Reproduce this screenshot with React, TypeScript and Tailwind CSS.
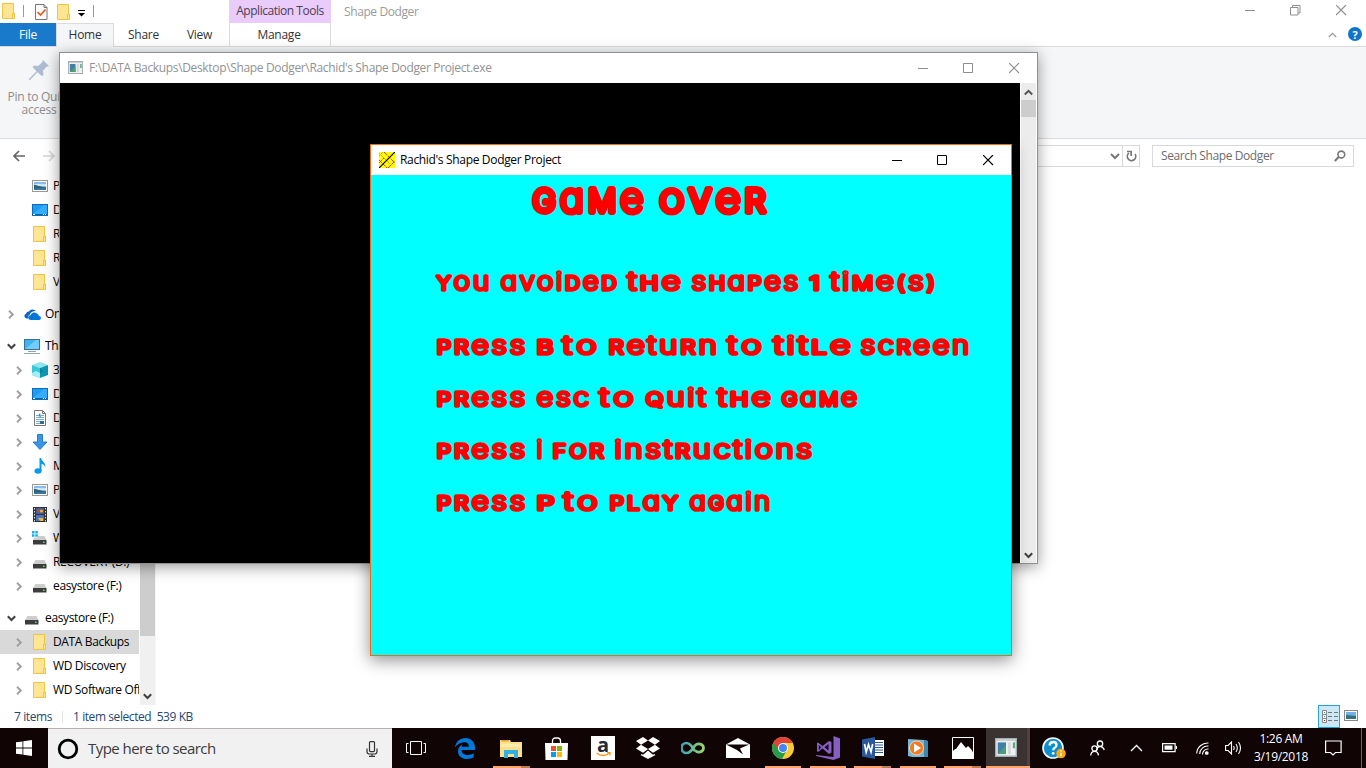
import React from "react";

type Kids = { children?: React.ReactNode };

/* ---------- small glyphs ---------- */

const Folder = () => (
  <svg width="14" height="16" viewBox="0 0 14 16">
    <path d="M.5.5h11v9.500h1v5.500H.5z" fill="#ffe594" stroke="#eec441" />
    <path d="M10.500 15.500v-5h2v5z" fill="#ffe594" stroke="#eec441" />
  </svg>
);

const Picture = () => (
  <svg width="16" height="12" viewBox="0 0 16 12">
    <rect x=".5" y=".5" width="15" height="11" fill="#fff" stroke="#9a9a9a" />
    <rect x="2" y="2" width="12" height="8" fill="#8dbdf0" />
    <path d="M2 5c3-2 5 0 12-1v2H2z" fill="#d9ecfb" />
    <path d="M2 5c4 0 6 2 12 2v3H2z" fill="#2e6470" />
    <path d="M2 8.500l12-1V10H2z" fill="#3d74a6" />
  </svg>
);

const DesktopIcon = () => (
  <svg width="16" height="12" viewBox="0 0 16 12">
    <rect x=".5" y=".5" width="15" height="11" fill="#1e9bf5" stroke="#0b70b8" />
    <path d="M1 10L12 1h3v9z" fill="#36adff" />
    <path d="M1 10.500h14" stroke="#0a64a8" />
    <path d="M1 10.500h2M11 10.500h1M13 10.500h1" stroke="#fff" />
  </svg>
);

const Cloud = () => (
  <svg width="17" height="11" viewBox="0 0 17 11">
    <path d="M2.500 9.500A2.500 2.500 0 0 1 2 4.700 3 3 0 0 1 5 2.500 4.300 4.300 0 0 1 12 2C8 2 6 4 6 5.500 4 6 3.700 8 4 9.500z" fill="#0a66c2" />
    <path d="M6.500 11a2.400 2.400 0 0 1 0-4.800A4 4 0 0 1 13.500 5 2.500 2.500 0 0 1 15 7a2 2 0 0 1 0 4z" fill="#0078d7" />
  </svg>
);

const Monitor = () => (
  <svg width="17" height="15" viewBox="0 0 17 15">
    <rect x=".5" y=".5" width="15" height="10" fill="#3fb2f2" stroke="#3c7196" />
    <path d="M1 10L12 1h3v9z" fill="#72ccfa" />
    <path d="M4 12.500h8M0 14.500h16" stroke="#91a5b5" />
  </svg>
);

const Cube = () => (
  <svg width="16" height="16" viewBox="0 0 16 16">
    <path d="M8 0l8 3-8 3-8-3z" fill="#8fe6ee" />
    <path d="M0 3l8 3v10l-8-3z" fill="#38c6d9" />
    <path d="M16 3L8 6v10l8-3z" fill="#1097b0" />
    <path d="M0 11l4-2 4 2v5l-8-3z" fill="#a5eef2" />
    <path d="M8 6l3 3-3 3z" fill="#0b7f9c" />
  </svg>
);

const Doc = () => (
  <svg width="13" height="16" viewBox="0 0 13 16">
    <path d="M.5.500h8l3 3v12H.5z" fill="#fff" stroke="#777" />
    <path d="M8.500.5v3h3" fill="none" stroke="#777" />
    <path d="M2 5.500h2M7 5.500h3M2 7.500h8M2 9.500h8M2 11.500h4M2 13.500h4" stroke="#7aa9c9" />
    <path d="M4 6l2-3 1 4z" fill="#2588c8" />
    <rect x="6" y="11" width="4" height="3" fill="#2a6f96" />
  </svg>
);

const Down = () => (
  <svg width="16" height="16" viewBox="0 0 16 16">
    <path d="M5.500.5h5V8H15l-7 7.500L1 8h4.500z" fill="#3a95e4" stroke="#2a7cc9" />
  </svg>
);

const Music = () => (
  <svg width="12" height="16" viewBox="0 0 12 16">
    <ellipse cx="4" cy="13" rx="3.600" ry="2.800" fill="#0a98f0" />
    <path d="M5.500 0h1.700c.2 3.500 4.800 4 4 9.500C10.600 7 9 6 7.500 6v7h-2z" fill="#0a98f0" />
  </svg>
);

const Film = () => (
  <svg width="14" height="15" viewBox="0 0 14 15">
    <rect width="14" height="15" fill="#333" />
    <path d="M1.500 1v14M12.500 1v14" stroke="#ddd" strokeDasharray="1.500 1.500" />
    <rect x="3" y="1" width="8" height="6" fill="#3b5fae" />
    <rect x="3" y="8" width="8" height="6" fill="#4b73c4" />
    <circle cx="6" cy="4" r="2" fill="#c34a2c" />
    <circle cx="8.500" cy="4" r="1.600" fill="#e2b530" />
    <path d="M5 11h5v3H7z" fill="#e5be3a" />
  </svg>
);

const Drive = ({ win }: { win?: boolean }) => (
  <svg width="16" height="14" viewBox="0 0 16 14">
    {win && <path d="M0 0h2.500v2.500H0zM3.300 0h2.500v2.500H3.300zM0 3.300h2.500v2.500H0zM3.300 3.300h2.500v2.500H3.300z" fill="#10b1ea" />}
    <path d={win ? "M6 5h6.500l2 4H1l1.500-2.500H6z" : "M3.500 5h9l2 4H1z"} fill="#cdcdcd" />
    <rect x="1" y="9" width="13.500" height="4.500" fill="#3c3c3c" />
    <rect x="11" y="10.500" width="1.500" height="1.500" fill="#3df06a" />
  </svg>
);

const ConsoleIcon = ({ w, h }: { w: number; h: number }) => (
  <svg width={w} height={h} viewBox="0 0 16 13" preserveAspectRatio="none">
    <rect x=".5" y=".5" width="15" height="12" fill="#eef0f1" stroke="#a4adb2" />
    <path d="M1 1.500h14" stroke="#c3cbd0" />
    <rect x="2" y="3" width="6" height="8" fill="#3f7fa8" />
    <path d="M2 11L8 5v6z" fill="#4f9d74" />
    <rect x="9.500" y="3" width="2" height="8" fill="#d5d8da" />
    <rect x="13" y="3" width="1.500" height="4" fill="#55a77c" />
  </svg>
);

const Chev = ({ open }: { open?: boolean }) =>
  open ? (
    <svg width="9" height="7" viewBox="0 0 9 7"><path d="M.8 1.200L4.500 5 8.200 1.200" fill="none" stroke="#404040" strokeWidth="2" /></svg>
  ) : (
    <svg width="6" height="9" viewBox="0 0 6 9"><path d="M1 .8L4.800 4.500 1 8.200" fill="none" stroke="#a0a0a0" strokeWidth="1.900" /></svg>
  );

const Controls = ({ color, restore }: { color: string; restore?: boolean }) => (
  <div className="flex">
    <div className="flex h-[11px] w-[46px] justify-center"><svg width="11" height="11" viewBox="0 0 11 11"><path d="M0 5.500h10" stroke={color} /></svg></div>
    <div className="flex h-[11px] w-[45px] justify-center">
      <svg width="11" height="11" viewBox="0 0 11 11" fill="none" stroke={color}>
        {restore ? <path d="M.5 2.500h7.500v7.500H.5zM2.500 2.500v-2h7.500v7.500H8" /> : <path d="M.5.5h9v9h-9z" />}
      </svg>
    </div>
    <div className="flex h-[11px] w-[46px] justify-center"><svg width="11" height="11" viewBox="0 0 11 11"><path d="M0 0l10 10M10 0L0 10" stroke={color} strokeWidth="1.200" /></svg></div>
  </div>
);

/* ---------- explorer ---------- */

const NavRow = ({ icon, label, chev, top, selected }: { icon: React.ReactNode; label: string; chev?: "open" | "closed"; top?: boolean; selected?: boolean }) => (
  <div className={`flex h-6 w-[139px] shrink-0 items-center overflow-hidden ${top ? "pl-[5px]" : "pl-[13px]"} ${selected ? "bg-[#d9d9d9]" : ""}`}>
    <span className="flex w-[12px] shrink-0 justify-center">{chev && <Chev open={chev === "open"} />}</span>
    <span className="ml-[6px] flex w-[18px] shrink-0 justify-center">{icon}</span>
    <span className="ml-[4px] whitespace-nowrap">{label}</span>
  </div>
);

const Tab = ({ children, className }: Kids & { className: string }) => (
  <div className={`flex h-[23px] items-center justify-center pt-px text-[#333] ${className}`}>{children}</div>
);

const Explorer = () => (
  <div className="flex h-[728px] flex-col bg-white">
    <div className="flex h-[23px] shrink-0 items-start">
      <div className="flex h-[23px] w-[229px] items-center pl-[2px]">
        <span className="-mt-px flex"><Folder /></span>
        <span className="-mt-px ml-[7px] h-[12px] w-px bg-[#999]" />
        <svg className="ml-[11px]" width="13" height="16" viewBox="0 0 13 16"><path d="M.5.5h8.500l3 3v12H.5z" fill="#fbfbfb" stroke="#777" /><path d="M9 .5v3h3" fill="none" stroke="#777" /><path d="M2.500 8l3 3 5-5.500" fill="none" stroke="#e8591c" strokeWidth="1.700" /></svg>
        <span className="ml-[9px] flex"><Folder /></span>
        <svg className="ml-[7px] mt-[3px]" width="8" height="7" viewBox="0 0 8 7"><path d="M0 .5h7" stroke="#000" /><path d="M0 3h7L3.500 6.500z" /></svg>
        <span className="-mt-px ml-[7px] h-[12px] w-px bg-[#999]" />
      </div>
      <div className="flex h-[23px] w-[102px] items-center justify-center bg-[#eaccfb] pb-[2px] text-[#4c3e54]"><span className="font-medium tracking-[-0.47px]">Application Tools</span></div>
      <div className="ml-[13px] flex h-[23px] flex-1 items-center tracking-[-0.4px] text-[#9b9b9b]">Shape Dodger</div>
      <div className="pt-[5px] pr-[2px]"><Controls color="#8e8e8e" restore /></div>
    </div>
    <div className="flex h-[24px] shrink-0 border-b border-[#dadbdc]">
      <Tab className="w-[56px] bg-[#1979ca] text-white!">File</Tab>
      <Tab className="h-[24px]! w-[58px] border border-b-0 border-[#dadbdc] bg-[#f5f6f7] pb-[2px]">Home</Tab>
      <Tab className="w-[59px]">Share</Tab>
      <Tab className="w-[53px]">View</Tab>
      <Tab className="ml-[3px] w-[102px] border-x border-[#dedede] pr-[2px]">Manage</Tab>
      <div className="flex flex-1 items-center justify-end gap-[11px] pr-[4px]">
        <svg width="9" height="6" viewBox="0 0 9 6"><path d="M.8 5L4.500 1.300 8.200 5" fill="none" stroke="#999" strokeWidth="1.300" /></svg>
        <span className="-mt-px flex size-[14px] items-center justify-center rounded-full bg-[#0f74ca] text-[11px] leading-none font-bold text-white">?</span>
      </div>
    </div>
    <div className="flex h-[92px] shrink-0 border-b border-[#dadbdc] bg-[#f5f6f7] pt-[13px]">
      <div className="flex w-[78px] flex-col items-center text-center leading-[13px] text-[#8d8d8d]">
        <svg width="20" height="20" viewBox="0 0 20 20"><path d="M14 0l6 6-2.500.8-3.500 4 .5 4-1.500 1.500-4.500-4L1 20H0v-1l7.500-7.800L3.500 7 5 5.500l4 .5 4-3.500z" fill="#adbcd3" /></svg>
        <span className="mt-[10px] block pl-px whitespace-nowrap">Pin to Quick</span>
        <span className="block">access</span>
      </div>
    </div>
    <div className="flex h-[35px] shrink-0 items-center pb-px">
      <svg className="ml-[13px]" width="44" height="12" viewBox="0 0 44 12" fill="none" strokeWidth="1.700"><path d="M12 6H1M6 1L1 6l5 5" stroke="#666" /><path d="M30 6h11M36 1l5 5-5 5" stroke="#d6d6d6" /></svg>
      <div className="ml-[14px] flex h-[22px] w-[1069px] border border-[#d9d9d9]">
        <div className="flex flex-1 items-center justify-end pr-[2px]"><svg width="10" height="7" viewBox="0 0 10 7"><path d="M1 1l4 4 4-4" fill="none" stroke="#777" strokeWidth="2" /></svg></div>
        <div className="flex w-[17px] items-center justify-center border-l border-[#d9d9d9]"><svg width="11" height="12" viewBox="0 0 11 12"><path d="M2.800 3.200A4.200 4.200 0 1 0 9 4M1 1.500h4.200V6" fill="none" stroke="#777" strokeWidth="1.700" /></svg></div>
      </div>
      <div className="ml-[12px] flex h-[22px] w-[202px] items-center justify-between border border-[#d9d9d9] pr-[7px] pl-[8px] text-[#6d6d6d]">
        <span className="tracking-[-0.4px]">Search Shape Dodger</span>
        <svg width="12" height="12" viewBox="0 0 12 12" fill="none" stroke="#777"><circle cx="7.300" cy="4.500" r="3.400" strokeWidth="1.600" /><path d="M4.700 7L.8 11" strokeWidth="2" /></svg>
      </div>
    </div>
    <div className="flex h-[531px] shrink-0">
      <div className="flex w-[140px] flex-col overflow-hidden tracking-[-0.36px] text-black">
        <NavRow icon={<Picture />} label="Pictures" />
        <NavRow icon={<DesktopIcon />} label="Desktop" />
        <NavRow icon={<Folder />} label="Rachid" />
        <NavRow icon={<Folder />} label="Resources" />
        <NavRow icon={<Folder />} label="Visual" />
        <div className="h-2 shrink-0" />
        <NavRow top chev="closed" icon={<Cloud />} label="OneDrive" />
        <div className="h-2 shrink-0" />
        <NavRow top chev="open" icon={<Monitor />} label="This PC" />
        <NavRow chev="closed" icon={<Cube />} label="3D Objects" />
        <NavRow chev="closed" icon={<DesktopIcon />} label="Desktop" />
        <NavRow chev="closed" icon={<Doc />} label="Documents" />
        <NavRow chev="closed" icon={<Down />} label="Downloads" />
        <NavRow chev="closed" icon={<Music />} label="Music" />
        <NavRow chev="closed" icon={<Picture />} label="Pictures" />
        <NavRow chev="closed" icon={<Film />} label="Videos" />
        <NavRow chev="closed" icon={<Drive win />} label="Windows (C:)" />
        <NavRow chev="closed" icon={<Drive />} label="RECOVERY (D:)" />
        <NavRow chev="closed" icon={<Drive />} label="easystore (F:)" />
        <div className="h-2 shrink-0" />
        <NavRow top chev="open" icon={<Drive />} label="easystore (F:)" />
        <NavRow selected chev="closed" icon={<Folder />} label="DATA Backups" />
        <NavRow chev="closed" icon={<Folder />} label="WD Discovery" />
        <NavRow chev="closed" icon={<Folder />} label="WD Software Offer" />
      </div>
      <div className="flex w-[16px] flex-col items-center border-r border-[#f6f6f6] bg-[#f0f0f0]">
        <div className="h-[462px] w-full bg-[#cdcdcd]" />
        <div className="flex flex-1 items-end pb-[5px]"><Chev open /></div>
      </div>
    </div>
    <div className="flex h-[23px] items-center text-[#26476f]">
      <span className="ml-[14px] w-[48px] tracking-[-0.4px]">7 items</span>
      <span className="h-[12px] w-px shrink-0 bg-[#e4e4e4]" />
      <span className="ml-[10px] tracking-[-0.42px]">1 item selected&nbsp; 539 KB</span>
      <div className="ml-auto flex items-center pr-[8px]">
        <svg width="22" height="23" viewBox="0 0 22 23"><rect x=".5" y=".5" width="21" height="22" fill="#cce8f6" stroke="#26a0da" /><path d="M4.500 5.500h4v12h-4zM4.500 9.500h4M4.500 13.500h4" fill="#fff" stroke="#888" /><path d="M10 7.500h4M16 7.500h4M10 11.500h4M16 11.500h4M10 15.500h4M16 15.500h4" stroke="#777" /><path d="M6 7.500h1" stroke="#2a7" /><path d="M6 11.500h1" stroke="#28f" /><path d="M6 15.500h1" stroke="#d00" /></svg>
        <svg className="ml-[4px] mb-[3px]" width="14" height="11" viewBox="0 0 14 11"><rect x=".5" y=".5" width="13" height="10" fill="#fff" stroke="#888" /><path d="M2 2h10v7H2z" fill="#6eb0ea" /><path d="M2 5c4 0 6 1 10 1v3H2z" fill="#36707a" /></svg>
      </div>
    </div>
  </div>
);

/* ---------- game window ---------- */

type Word = [text: string, x0: number, x1: number];
const lines: { y: number; title?: boolean; words: Word[] }[] = [
  { y: 37.2, title: true, words: [["GaMe", 160.5, 273.5], ["oVeR", 287, 396]] },
  { y: 114.600, words: [["You", 65, 119], ["avoiDeD", 129, 246.500], ["tHe", 256, 311], ["sHaPes", 320, 428], ["1", 438, 448.500], ["tiMe(s)", 459, 565]] },
  { y: 178.6, words: [["PRess", 65, 155], ["B", 165, 182], ["to", 191, 228], ["RetuRn", 237, 347], ["to", 356, 393], ["titLe", 402, 481], ["scReen", 489, 599]] },
  { y: 230.6, words: [["PRess", 65, 155], ["esc", 165, 219], ["to", 228, 265], ["Quit", 274, 336], ["tHe", 346, 401], ["GaMe", 410, 487]] },
  { y: 282.6, words: [["PRess", 65, 155], ["i", 165, 171], ["FoR", 181, 234], ["instRuctions", 243, 442]] },
  { y: 334.6, words: [["PRess", 65, 155], ["P", 165, 183], ["to", 192, 229], ["PLaY", 238, 308], ["aGain", 318, 400]] },
];

const GameScreen = () => (
  <svg className="block [font-feature-settings:'cv11']" width="640" height="480" viewBox="0 0 640 480" fontFamily="Inter, 'Noto Sans', sans-serif" fill="#f00" stroke="#f00" strokeLinejoin="round" strokeLinecap="round">
    {lines.map((l) =>
      l.words.map(([w, a, b]) => {
        const s = l.title ? 1.63 : 1;
        const single = w.length === 1;
        const gap = w === "to" ? 3.4 : 2.6;
        return (
          <text key={l.y + "-" + a} x={a + 0.8 * s} y={l.y} textLength={b - a + (single ? -0.5 : 1.2 * s)} lengthAdjust="spacingAndGlyphs" strokeWidth={3.6 * s} letterSpacing={single ? 0 : gap * s}>
            {(w.match(/[A-Z0-9()]+|[a-z]+/g) || []).map((run, i) => {
              const small = /[A-Z0-9()]/.test(run);
              return <tspan key={i} fontSize={(small ? 19 : 24.8) * s} fontWeight={small ? 300 : 200}>{run}</tspan>;
            })}
          </text>
        );
      })
    )}
  </svg>
);

/* ---------- taskbar ---------- */

const Cell = ({ children, className = "", run, stack }: Kids & { className?: string; run?: boolean; stack?: boolean }) => (
  <div className={`flex h-10 shrink-0 flex-col items-center ${className}`}>
    <div className="flex h-[38px] w-full items-center justify-center pt-[2px]">{children}</div>
    {run && <div className={`flex h-[2px] ${stack ? "w-[37px]" : "w-[36px]"}`}><span className="flex-1 bg-[#ffa36b]" />{stack && <span className="w-[9px] bg-[#bf7b52]" />}</div>}
  </div>
);

const Taskbar = () => (
  <div className="flex h-10 items-center bg-[#100404]">
    <Cell className="w-12"><svg width="16" height="16" viewBox="0 0 16 16" fill="#fff"><path d="M0 2.300l6.500-.9v6.200H0zM7.300 1.300L16 0v7.600H7.300zM0 8.400h6.500v6.200L0 13.700zM7.300 8.400H16V16l-8.700-1.300z" /></svg></Cell>
    <div className="flex h-10 w-[344px] items-center border-t border-[#b7b1b1] bg-[#f1f1f1] pl-[9px] font-['Open_Sans']">
      <svg width="22" height="22" viewBox="0 0 22 22"><circle cx="11" cy="11" r="8.800" fill="none" stroke="#000" strokeWidth="2.800" /></svg>
      <span className="ml-[9px] text-[15px] tracking-[-0.55px] whitespace-nowrap text-[#3b3b3b]">Type here to search</span>
      <svg className="ml-auto mr-[14px]" width="12" height="16" viewBox="0 0 12 16" fill="none" stroke="#333" strokeWidth="1.200"><rect x="3.500" y=".6" width="5" height="10" rx="1" /><path d="M1 7.500v3q0 2.500 2.500 2.500h5q2.500 0 2.500-2.500v-3M6 13v2.500M3 15.400h6" /></svg>
    </div>
    <Cell className="w-[51px] pr-[3px]"><svg width="20" height="16" viewBox="0 0 20 16" fill="none" stroke="#fff"><path d="M4.500 1.500h11v13h-11zM2.500 3.500h-2v9h2M17.500 3.500h2v9h-2" /></svg></Cell>
    <Cell className="w-[45px] pr-px"><svg width="20" height="21" viewBox="0 0 20 21"><path d="M0 9.500C.8 3.500 5 0 10.500 0 16.500 0 20 4.500 20 9.500v2.400H6.500c.2 3.600 3 5 6.200 5 2.300 0 4.300-.6 6-1.600v4C17 20.500 14.500 21 12 21 6.500 21 3 17.800 3 13.200 3 10 4.800 7.500 7.500 6.200 6.800 7 6.600 7.800 6.500 8.800h7.400c0-3.200-1.700-4.600-4.500-4.600C5.500 4.200 2 6.300 0 9.500z" fill="#0078d7" /></svg></Cell>
    <Cell className="w-[46px]" run stack><svg width="22" height="19" viewBox="0 0 22 19"><path d="M0 1h10l1 2h11v15H0z" fill="#ffe08a" /><path d="M1 1h8v1.500H1z" fill="#f0a52a" /><path d="M1 5h20v3H1z" fill="#ffebab" /><path d="M4 19v-8h14v8h-4v-4H8v4z" fill="#35aee2" /></svg></Cell>
    <Cell className="w-[45px]"><svg width="23" height="23" viewBox="0 0 23 23"><path d="M7.500 6V4q0-3 3-3h2q3 0 3 3v2" fill="none" stroke="#fff" strokeWidth="1.300" /><path d="M0 6h23l-.5 17H.5z" fill="#fff" /><path d="M6 9h5v5H6z" fill="#f04e25" /><path d="M12 9h5v5h-5z" fill="#7eb900" /><path d="M6 15h5v5H6z" fill="#00a1f1" /><path d="M12 15h5v5h-5z" fill="#ffb901" /></svg></Cell>
    <Cell className="w-[46px] pl-[2px]"><div className="relative flex size-6 items-center justify-center bg-white font-['Open_Sans'] text-[20px] leading-none font-bold text-[#222b38]"><span className="-mt-[7px]">a</span><svg className="absolute bottom-[3px] left-[5px]" width="15" height="5" viewBox="0 0 15 5"><path d="M.5 1q6.500 5 13 0M11 .5h3v3" fill="none" stroke="#f7991c" strokeWidth="1.300" /></svg></div></Cell>
    <Cell className="w-[45px]"><svg width="24" height="22" viewBox="0 0 24 22" fill="#fff"><path d="M7 0l5 3.500-7 4.300L0 4zM17 0l-5 3.500 7 4.300L24 4zM0 11.500l5-3.700 7 4.200-5 3.800zM24 11.500l-5-3.700-7 4.200 5 3.800zM5 17l2 .8 5-4.300 5 4.300 2-.8v1.200L12 22l-7-3.800z" /></svg></Cell>
    <Cell className="w-[45px]"><svg width="24" height="14" viewBox="0 0 24 14"><defs><linearGradient id="inf"><stop stopColor="#38a5bd" /><stop offset="1" stopColor="#9ad36c" /></linearGradient></defs><path d="M14 10c-2-2-4-8-8.500-8a5 5 0 0 0 0 10c5 0 6-5 8.500-7.500C17 1.500 22.500 3 22.500 7s-6 5.500-8 2.500" fill="none" stroke="url(#inf)" strokeWidth="2.700" /></svg></Cell>
    <Cell className="w-[45px]"><svg width="24" height="20" viewBox="0 0 24 20"><path d="M0 6.500L12 0l12 6.500V20H0z" fill="#fff" /><path d="M0 6.500h23L14 10.500l3 6L11 12z" fill="#100404" /></svg></Cell>
    <Cell className="w-[45px]" run><svg width="22" height="22" viewBox="0 0 22 22"><circle cx="11" cy="11" r="11" fill="#fcc934" /><path d="M11 11L1.500 5.500A11 11 0 0 0 10 22l5-9z" fill="#269b4b" /><path d="M11 11V6h9.800A11 11 0 0 0 1.500 5.500L6 13z" fill="#e14436" /><circle cx="11" cy="11" r="5" fill="#fff" /><circle cx="11" cy="11" r="4" fill="#4285f4" /></svg></Cell>
    <Cell className="w-[45px]" run><svg width="24" height="24" viewBox="0 0 24 24" fill="#865fc5"><path d="M17.500 0L24 2.500v19L17.500 24 0 20v-1l17.500 2z" /><path fillRule="evenodd" d="M2 6.500l4.500 3.500L13 5l2.500 1v10.500L13 18l-6.500-5.500L2 16l-1-.7V7zM2.800 9v5l2.300-2.500zM8.500 11.300l4 3.200V8z" /></svg></Cell>
    <Cell className="w-[45px]" run stack><svg width="22" height="22" viewBox="0 0 22 22"><path d="M11 3h11v16H11z" fill="#fff" /><path d="M13 5.500h8M13 8h8M13 10.500h8M13 13h8M13 15.500h8" stroke="#2b579a" /><path d="M0 2.500L13 0v22L0 19.500z" fill="#2b579a" /><path d="M2.500 7l1.700 8 2.300-7.500L9 15l1.700-8" fill="none" stroke="#fff" strokeWidth="1.700" /></svg></Cell>
    <Cell className="w-[45px]" run><svg width="20" height="20" viewBox="0 0 20 20"><path d="M0 1l16 1 4 1v16H4L0 18z" fill="#73b7da" /><path d="M16 2l4 1v16h-4z" fill="#3f87ae" /><circle cx="8.500" cy="10" r="7" fill="#f27a24" stroke="#f9d0aa" /><path d="M6 5.500l7 4.500-7 4.500z" fill="#fff" /></svg></Cell>
    <Cell className="w-[45px]" run stack><svg width="22" height="22" viewBox="0 0 22 22"><path d="M.5.5h21v21H.5z" fill="none" stroke="#fff" /><path d="M0 15l3-3h1l5-7 5 6 2-2 3 3 3 5v5H0z" fill="#fff" /></svg></Cell>
    <div className="ml-px flex h-10 w-[44px] shrink-0 flex-col bg-[#3b3332]">
      <div className="flex h-[38px] items-center justify-center border-r-3 border-[#54413c] pt-[1px] pr-px"><ConsoleIcon w={22} h={19} /></div>
      <div className="h-[2px] bg-[#ffa36b]" />
    </div>
    <Cell className="w-[47px]"><svg width="24" height="22" viewBox="0 0 24 22"><circle cx="11" cy="11" r="10" fill="#0d8ed0" stroke="#fff" strokeWidth="1.600" /><path d="M7.500 8.500Q8 5 11.200 5T14.500 8q0 2-2 3-1.300.7-1.300 2.300" fill="none" stroke="#fff" strokeWidth="2.300" /><circle cx="11.200" cy="16.300" r="1.400" fill="#fff" /><circle cx="19" cy="16.500" r="4.800" fill="#f8a912" /><path d="M19 15.700v3.500M19 13.300v1.300" stroke="#fff" strokeWidth="1.400" /></svg></Cell>
    <Cell className="w-[40px]"><svg width="15" height="16" viewBox="0 0 15 16" fill="none" stroke="#fff" strokeWidth="1.300"><circle cx="10" cy="3.700" r="2.700" /><path d="M7 10q0-3.500 3-3.500t4.300 3.500" /><circle cx="4.500" cy="8.500" r="2.600" /><path d="M.7 15.500Q1 11.300 4.500 11.300t4 4" /></svg></Cell>
    <Cell className="w-[38px]"><svg width="13" height="8" viewBox="0 0 13 8"><path d="M1 7l5.500-5.500L12 7" fill="none" stroke="#fff" strokeWidth="1.300" /></svg></Cell>
    <Cell className="w-[29px]"><svg width="15" height="10" viewBox="0 0 15 10"><path d="M.6.600h12.500v8H.6zM14.500 3v3" fill="none" stroke="#fff" strokeWidth="1.200" /><path d="M2.500 2.500h8v4.200h-8z" fill="#fff" /></svg></Cell>
    <Cell className="w-[34px] pl-[3px]"><svg width="14" height="13" viewBox="0 0 14 13" fill="none" stroke="#fff" strokeWidth="1.100"><path d="M.7 11.500A11 11 0 0 1 12.500 1M3.700 12A8 8 0 0 1 12.500 4M6.500 12.500A5.500 5.500 0 0 1 12.500 7" /><circle cx="10.800" cy="11" r="1.300" fill="#fff" /></svg></Cell>
    <Cell className="w-[30px]"><svg width="17" height="14" viewBox="0 0 17 14" fill="none" stroke="#fff" strokeWidth="1.100"><path d="M.6 4.500h2.500L6.500 1v12L3.100 9.500H.6zM8.500 5q1.300 2 0 4M11 3q2.600 4 0 8M13.500 1q4 6 0 12" /></svg></Cell>
    <div className="flex w-[66px] flex-col items-center text-[12px] leading-[18px] tracking-[-0.3px] whitespace-nowrap text-white"><span>1:26 AM</span><span>3/19/2018</span></div>
    <Cell className="w-[37px] pl-[2px]"><svg width="17" height="17" viewBox="0 0 17 17"><path d="M.6 1h15.500v11.500H10.500L8 15l-2.500-2.500H.6z" fill="none" stroke="#fff" strokeWidth="1.200" /></svg></Cell>
    <span className="ml-[10px] h-10 w-px bg-[#6c6464]" />
  </div>
);

export default function App() {
  return (
    <div className="relative h-[768px] w-[1366px] overflow-hidden font-['Open_Sans','Noto_Sans',sans-serif] text-[12px] tracking-[-0.25px]">
      <Explorer />
      <Taskbar />

      <div className="absolute top-[52px] left-[59px] flex h-[512px] w-[979px] flex-col border border-[#8f8f8f] bg-white shadow-[0_3px_14px_rgba(0,0,0,0.4)]">
        <div className="flex h-[30px] shrink-0 items-center pl-[8px] text-[#929292]">
          <span className="-mt-px flex"><ConsoleIcon w={15} h={13} /></span>
          <span className="ml-[6px] flex-1 tracking-[-0.34px] whitespace-nowrap">F:\DATA Backups\Desktop\Shape Dodger\Rachid's Shape Dodger Project.exe</span>
          <Controls color="#8e8e8e" />
        </div>
        <div className="flex flex-1">
          <div className="w-[960px] bg-black" />
          <div className="flex w-[17px] flex-col items-center border-x border-white bg-[#ececec]">
            <svg className="mt-[6px]" width="9" height="7" viewBox="0 0 9 7"><path d="M.8 5.500L4.500 1.800 8.200 5.500" fill="none" stroke="#555" strokeWidth="2" /></svg>
            <div className="mt-[4px] h-[17px] w-full bg-[#cdcdcd]" />
            <div className="mt-auto flex pb-[4px]"><Chev open /></div>
          </div>
        </div>
      </div>

      <div className="absolute top-[144px] left-[370px] flex h-[512px] w-[642px] flex-col border border-[#ee6a14] bg-[#00ffff] shadow-[0_4px_16px_rgba(0,0,0,0.45)]">
        <div className="flex h-[30px] shrink-0 items-center bg-white pl-[8px] text-black">
          <svg className="-mt-px" width="16" height="16" viewBox="0 0 16 16"><path d="M0 0h16v16H0z" fill="#ff0" /><path d="M0 4l4-4M0 1l11 11" stroke="#dba90a" /><path d="M5 0l11 11M9 16l7-7M0 8l8 8M0 11l5-5" stroke="#e32" fill="none" strokeDasharray="4 1" /><path d="M0 16L16 0" stroke="#000" strokeWidth="1.200" /></svg>
          <span className="ml-[5px] flex-1 tracking-[-0.33px] whitespace-nowrap">Rachid's Shape Dodger Project</span>
          <Controls color="#000" />
        </div>
        <GameScreen />
      </div>
    </div>
  );
}
